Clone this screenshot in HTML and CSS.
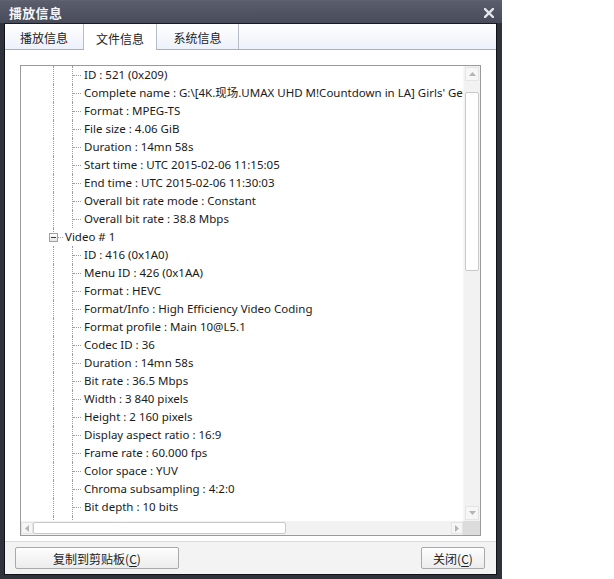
FILE: index.html
```html
<!DOCTYPE html>
<html>
<head>
<meta charset="utf-8">
<link rel="stylesheet" href="styles.css">
</head>
<body>
<div class="window">
  <div class="titlebar">
    <span class="title">播放信息</span>
    <svg class="close" width="10" height="10" viewBox="0 0 10 10"><path d="M1 1L9 9M9 1L1 9" stroke="#e4e6ec" stroke-width="2.4" stroke-linecap="square"/></svg>
  </div>
  <div class="panel">
    <div class="tabs">
      <div class="tab t1">播放信息</div>
      <div class="tab t2 active">文件信息</div>
      <div class="tab t3">系统信息</div>
      <div class="tabfill"></div>
    </div>
    <div class="body">
      <div class="listbox">
        <div class="viewport">
          <div class="tree">
            <div class="row l2"><span class="g v"></span><span class="g c"></span><span class="txt">ID : 521 (0x209)</span></div>
            <div class="row l2"><span class="g v"></span><span class="g c"></span><span class="txt">Complete name : G:\[4K.现场.UMAX UHD M!Countdown in LA] Girls' Generation - Mr.Mr.ts</span></div>
            <div class="row l2"><span class="g v"></span><span class="g c"></span><span class="txt">Format : MPEG-TS</span></div>
            <div class="row l2"><span class="g v"></span><span class="g c"></span><span class="txt">File size : 4.06 GiB</span></div>
            <div class="row l2"><span class="g v"></span><span class="g c"></span><span class="txt">Duration : 14mn 58s</span></div>
            <div class="row l2"><span class="g v"></span><span class="g c"></span><span class="txt">Start time : UTC 2015-02-06 11:15:05</span></div>
            <div class="row l2"><span class="g v"></span><span class="g c"></span><span class="txt">End time : UTC 2015-02-06 11:30:03</span></div>
            <div class="row l2"><span class="g v"></span><span class="g c"></span><span class="txt">Overall bit rate mode : Constant</span></div>
            <div class="row l2"><span class="g v"></span><span class="g c last"></span><span class="txt">Overall bit rate : 38.8 Mbps</span></div>
            <div class="row l1"><span class="g box"><i class="minus"></i></span><span class="txt node">Video # 1</span></div>
            <div class="row l2"><span class="g v"></span><span class="g c"></span><span class="txt">ID : 416 (0x1A0)</span></div>
            <div class="row l2"><span class="g v"></span><span class="g c"></span><span class="txt">Menu ID : 426 (0x1AA)</span></div>
            <div class="row l2"><span class="g v"></span><span class="g c"></span><span class="txt">Format : HEVC</span></div>
            <div class="row l2"><span class="g v"></span><span class="g c"></span><span class="txt">Format/Info : High Efficiency Video Coding</span></div>
            <div class="row l2"><span class="g v"></span><span class="g c"></span><span class="txt">Format profile : Main 10@L5.1</span></div>
            <div class="row l2"><span class="g v"></span><span class="g c"></span><span class="txt">Codec ID : 36</span></div>
            <div class="row l2"><span class="g v"></span><span class="g c"></span><span class="txt">Duration : 14mn 58s</span></div>
            <div class="row l2"><span class="g v"></span><span class="g c"></span><span class="txt">Bit rate : 36.5 Mbps</span></div>
            <div class="row l2"><span class="g v"></span><span class="g c"></span><span class="txt">Width : 3 840 pixels</span></div>
            <div class="row l2"><span class="g v"></span><span class="g c"></span><span class="txt">Height : 2 160 pixels</span></div>
            <div class="row l2"><span class="g v"></span><span class="g c"></span><span class="txt">Display aspect ratio : 16:9</span></div>
            <div class="row l2"><span class="g v"></span><span class="g c"></span><span class="txt">Frame rate : 60.000 fps</span></div>
            <div class="row l2"><span class="g v"></span><span class="g c"></span><span class="txt">Color space : YUV</span></div>
            <div class="row l2"><span class="g v"></span><span class="g c"></span><span class="txt">Chroma subsampling : 4:2:0</span></div>
            <div class="row l2"><span class="g v"></span><span class="g c"></span><span class="txt">Bit depth : 10 bits</span></div>
            <div class="row l2"><span class="g v"></span><span class="g c"></span><span class="txt">Bits/(Pixel*Frame) : 0.073</span></div>
          </div>
        </div>
        <div class="vscroll">
          <div class="arrow up"><svg width="7" height="4" viewBox="0 0 7 4"><path d="M0 4L3.5 0L7 4Z" fill="#b4b4b4"/></svg></div>
          <div class="vtrack"><div class="vthumb"></div></div>
          <div class="arrow down"><svg width="7" height="4" viewBox="0 0 7 4"><path d="M0 0L3.5 4L7 0Z" fill="#b4b4b4"/></svg></div>
        </div>
        <div class="hscroll">
          <div class="harrow left"><svg width="4" height="7" viewBox="0 0 4 7"><path d="M4 0L0 3.5L4 7Z" fill="#b4b4b4"/></svg></div>
          <div class="htrack"><div class="hthumb"></div></div>
          <div class="harrow right"><svg width="4" height="7" viewBox="0 0 4 7"><path d="M0 0L4 3.5L0 7Z" fill="#b4b4b4"/></svg></div>
        </div>
        <div class="corner"></div>
      </div>
    </div>
    <div class="footer">
      <button class="btn copy">复制到剪贴板(<u>C</u>)</button>
      <button class="btn closebtn">关闭(<u>C</u>)</button>
    </div>
  </div>
</div>
</body>
</html>
```
FILE: styles.css
```css
* { box-sizing: border-box; }
html, body { margin: 0; padding: 0; background: #ffffff; }
body {
  font-family: "Noto Sans", "Noto Sans CJK SC", sans-serif;
  font-size: 11.5px;
  color: #1a1a1a;
}
.window {
  width: 502px;
  height: 579px;
  background: #30323b;
  display: flex;
  flex-direction: column;
  padding: 0 5px 4px 4px;
  border-top: 1px solid #5e6170;
}
.titlebar {
  flex: none;
  height: 22px;
  display: flex;
  align-items: center;
  justify-content: space-between;
  background: linear-gradient(#5a5d6b, #484b59);
  margin: 0 -5px 0 -4px;
  padding: 0 8px 0 9px;
}
.title {
  color: #f4f5f8;
  font-weight: bold;
  font-size: 13px;
  font-family: "Noto Sans CJK SC", sans-serif;
  letter-spacing: 0.3px;
}
.close { display: block; margin-top: 1px; }
.panel {
  flex: 1;
  min-height: 0;
  display: flex;
  flex-direction: column;
  background: #ffffff;
  border: 1px solid #111217;
  border-top-color: #1a1b20;
}
.tabs {
  flex: none;
  height: 26px;
  display: flex;
  background: linear-gradient(#ffffff, #edf1fa);
  border-bottom: 1px solid #a8afbd;
}
.tab {
  display: flex;
  align-items: center;
  justify-content: center;
  font-family: "Noto Sans CJK SC", sans-serif;
  font-size: 12px;
  color: #222;
  border-right: 1px solid #b6bcc8;
  padding-top: 2px;
}
.t1 { width: 79px; }
.t2 { width: 73px; }
.t3 { width: 82px; }
.tab.active {
  background: #ffffff;
  height: 26px;
  position: relative;
  z-index: 1;
}
.tabfill { flex: 1; }
.body {
  flex: 1;
  min-height: 0;
  padding: 15px 15px 5px 15px;
  background: #ffffff;
  display: flex;
}
.listbox {
  flex: 1;
  min-height: 0;
  border: 1px solid #9a9a9a;
  display: grid;
  grid-template-columns: minmax(0, 1fr) 17px;
  grid-template-rows: minmax(0, 1fr) 14px;
  overflow: hidden;
  background: #fff;
}
.viewport {
  overflow: hidden;
  position: relative;
  min-height: 0;
}
.tree { padding-left: 23px; }
.row {
  height: 18px;
  display: flex;
  align-items: stretch;
  white-space: nowrap;
}
.g {
  width: 19px;
  flex: none;
  position: relative;
}
.g.v::before, .g.c::before {
  content: "";
  position: absolute;
  left: 9px;
  top: 0;
  bottom: 0;
  border-left: 1px dotted #9c9c9c;
}
.g.c::after {
  content: "";
  position: absolute;
  left: 10px;
  width: 8px;
  top: 9px;
  border-top: 1px dotted #9c9c9c;
}
.g.box::before {
  content: "";
  position: absolute;
  left: 9px;
  top: 0;
  height: 4px;
  border-left: 1px dotted #9c9c9c;
}
.g.box::after {
  content: "";
  position: absolute;
  left: 14px;
  width: 5px;
  top: 9px;
  border-top: 1px dotted #9c9c9c;
}
.minus {
  position: absolute;
  left: 5px;
  top: 5px;
  width: 9px;
  height: 9px;
  border: 1px solid #a0a0a0;
  background: linear-gradient(#ffffff, #e6e6e6);
}
.minus::after {
  content: "";
  position: absolute;
  left: 1px;
  top: 3px;
  width: 5px;
  height: 1px;
  background: #3c3c3c;
}
.txt {
  line-height: 18px;
  padding-left: 2px;
}
.vscroll {
  background: #f2f2f2;
  border-left: 1px solid #f7f7f7;
  display: flex;
  flex-direction: column;
  min-height: 0;
}
.arrow {
  flex: none;
  height: 14px;
  display: flex;
  align-items: center;
  justify-content: center;
  border: 1px solid #e4e4e4;
  background: #f6f6f6;
  margin: 1px 1px 0 1px;
}
.arrow.down { margin: 0 1px 1px 1px; }
.vtrack { flex: 1; min-height: 0; padding: 11px 1px 2px 1px; }
.vthumb {
  height: 179px;
  border: 1px solid #c9c9c9;
  border-radius: 2px;
  background: #ffffff;
}
.hscroll {
  background: #f2f2f2;
  display: flex;
  padding-top: 1px;
  min-width: 0;
}
.harrow {
  flex: none;
  width: 12px;
  display: flex;
  align-items: center;
  justify-content: center;
  border: 1px solid #e4e4e4;
  background: #f6f6f6;
  margin: 0 0 1px 0;
}
.htrack { flex: 1; padding: 0 1px 1px 0; }
.hthumb {
  width: 253px;
  height: 100%;
  border: 1px solid #c9c9c9;
  border-radius: 2px;
  background: #ffffff;
}
.corner { background: #dcdcdc; }
.footer {
  flex: none;
  height: 33px;
  border-top: 1px solid #d9d9d9;
  background: #f3f3f3;
  display: flex;
  align-items: flex-start;
  justify-content: space-between;
  padding: 5px 11px 0 10px;
}
.btn {
  height: 22px;
  border: 1px solid #a9a9a9;
  border-radius: 2px;
  background: linear-gradient(#fdfdfd, #ececec);
  font-family: "Noto Sans CJK SC", sans-serif;
  font-size: 12px;
  color: #222;
  padding: 0;
}
.btn u { text-decoration: underline; text-underline-offset: 2px; }
.copy { width: 164px; }
.closebtn { width: 64px; }
```
